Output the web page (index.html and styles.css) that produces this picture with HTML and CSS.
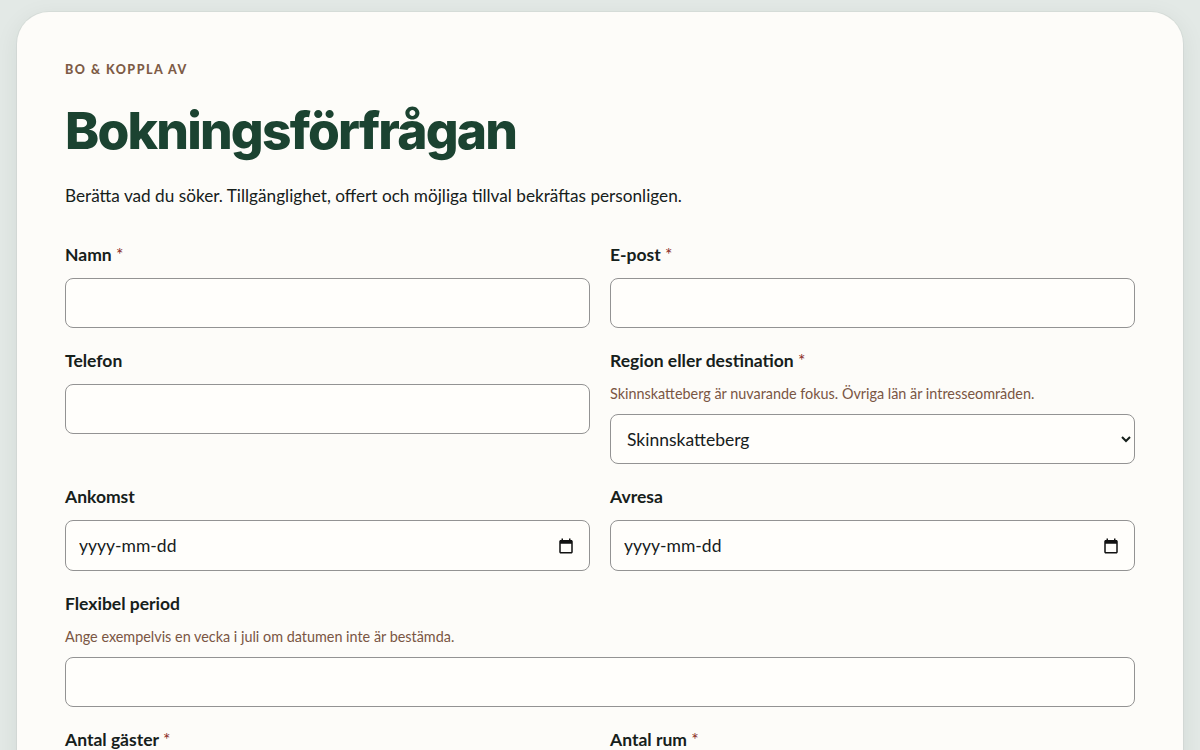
FILE: index.html
```html
<!DOCTYPE html>
<html lang="sv">
<head>
<meta charset="utf-8">
<title>Bokningsförfrågan</title>
<link rel="stylesheet" href="styles.css">
</head>
<body>
<main class="card">
  <p class="eyebrow">BO &amp; KOPPLA AV</p>
  <h1 class="title">Bokningsförfrågan</h1>
  <p class="intro">Berätta vad du söker. Tillgänglighet, offert och möjliga tillval bekräftas personligen.</p>
  <form class="form">
    <div class="field">
      <label class="label" for="namn">Namn <span class="req">*</span></label>
      <input class="input" id="namn" type="text">
    </div>
    <div class="field">
      <label class="label" for="epost">E-post <span class="req">*</span></label>
      <input class="input" id="epost" type="email">
    </div>
    <div class="field">
      <label class="label" for="tel">Telefon</label>
      <input class="input" id="tel" type="tel">
    </div>
    <div class="field">
      <label class="label" for="region">Region eller destination <span class="req">*</span></label>
      <p class="hint">Skinnskatteberg är nuvarande fokus. Övriga län är intresseområden.</p>
      <select class="input select" id="region">
        <option>Skinnskatteberg</option>
      </select>
    </div>
    <div class="field">
      <label class="label" for="ankomst">Ankomst</label>
      <div class="input date">
        <input class="date-text" id="ankomst" type="text" placeholder="yyyy-mm-dd">
        <svg class="cal" width="18" height="18" viewBox="0 0 24 24" aria-hidden="true"><path d="M19 4h-1V2h-2v2H8V2H6v2H5c-1.11 0-2 .9-2 2v14c0 1.1.89 2 2 2h14c1.1 0 2-.9 2-2V6c0-1.1-.9-2-2-2zm0 16H5V9h14v11z" fill="#111"/></svg>
      </div>
    </div>
    <div class="field">
      <label class="label" for="avresa">Avresa</label>
      <div class="input date">
        <input class="date-text" id="avresa" type="text" placeholder="yyyy-mm-dd">
        <svg class="cal" width="18" height="18" viewBox="0 0 24 24" aria-hidden="true"><path d="M19 4h-1V2h-2v2H8V2H6v2H5c-1.11 0-2 .9-2 2v14c0 1.1.89 2 2 2h14c1.1 0 2-.9 2-2V6c0-1.1-.9-2-2-2zm0 16H5V9h14v11z" fill="#111"/></svg>
      </div>
    </div>
    <div class="field full">
      <label class="label" for="flex">Flexibel period</label>
      <p class="hint">Ange exempelvis en vecka i juli om datumen inte är bestämda.</p>
      <input class="input" id="flex" type="text">
    </div>
    <div class="field">
      <label class="label" for="gaster">Antal gäster <span class="req">*</span></label>
      <input class="input" id="gaster" type="number">
    </div>
    <div class="field">
      <label class="label" for="rum">Antal rum <span class="req">*</span></label>
      <input class="input" id="rum" type="number">
    </div>
  </form>
</main>
</body>
</html>
```
FILE: styles.css
```css
* { box-sizing: border-box; }
html, body { margin: 0; padding: 0; }
body {
  background: #e3e9e6;
  font-family: "Lato", "Noto Sans", sans-serif;
  color: #16201b;
  padding: 12px 17px 40px;
}
.card {
  background: #fdfcf9;
  border-radius: 32px;
  box-shadow: 0 0 0 1px rgba(0,0,0,0.04), 0 6px 24px rgba(30,50,40,0.08);
  padding: 50px 48px 48px;
}
.eyebrow {
  margin: 0;
  font-size: 12.5px;
  font-weight: 900;
  letter-spacing: 0.12em;
  color: #7d5b46;
  line-height: 16px;
}
.title {
  margin: 22px 0 0;
  font-family: "Inter", sans-serif;
  font-weight: 800;
  font-size: 51.5px;
  letter-spacing: -0.035em;
  line-height: 60px;
  color: #1b4331;
}
.intro {
  margin: 23px 0 0;
  font-size: 17.2px;
  line-height: 26px;
}
.form {
  margin-top: 34px;
  display: grid;
  grid-template-columns: 1fr 1fr;
  column-gap: 20px;
  row-gap: 21px;
  align-items: start;
}
.field { display: flex; flex-direction: column; }
.full { grid-column: 1 / -1; }
.label {
  font-weight: 700;
  font-size: 17.5px;
  line-height: 24px;
  margin-bottom: 11px;
}
.req { color: #8a2b1f; font-weight: 400; }
.hint {
  margin: 0 0 10px;
  font-size: 14.4px;
  line-height: 20px;
  color: #7a5644;
}
.input {
  height: 50px;
  border: 1px solid #939393;
  border-radius: 8px;
  background: #fffefb;
  font-family: inherit;
  font-size: 17px;
  color: #16201b;
  padding: 0 14px;
  width: 100%;
}
.select { padding: 0 10px 0 12px; font-size: 17.5px; }
.date {
  display: flex;
  align-items: center;
  padding: 0 14px 0 13px;
  height: 51px;
}
.date-text {
  flex: 1;
  border: 0;
  background: transparent;
  font-family: inherit;
  font-size: 17.5px;
  color: #16201b;
  padding: 0;
  outline: none;
  min-width: 0;
}
.date-text::placeholder { color: #16201b; opacity: 1; }
.cal { flex: none; }
```
